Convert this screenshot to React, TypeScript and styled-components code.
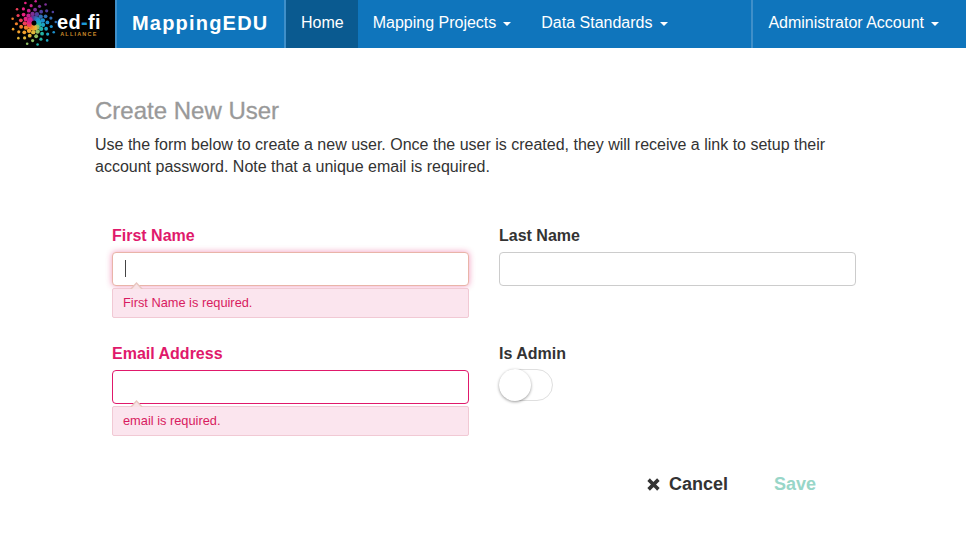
import React from "react";
import styled, { createGlobalStyle } from "styled-components";

const GlobalStyle = createGlobalStyle`
  html, body {
    margin: 0;
    padding: 0;
    background: #fff;
    font-family: "Liberation Sans", Arial, sans-serif;
    color: #333;
  }
  * { box-sizing: border-box; }
`;

const NavBar = styled.nav`
  display: flex;
  height: 48px;
  background: #0f75bc;
  color: #fff;
`;

const LogoBox = styled.div`
  display: flex;
  align-items: center;
  width: 115px;
  padding-left: 11px;
  background: #000;
`;

const LogoWords = styled.div`
  display: flex;
  flex-direction: column;
  align-items: center;
  margin: 3px 0 0 -2px;
`;

const LogoName = styled.div`
  font-size: 20px;
  line-height: 17px;
  font-weight: 700;
  letter-spacing: 0.3px;

  span {
    color: #1c9ad6;
  }
`;

const LogoSub = styled.div`
  font-size: 5.5px;
  line-height: 7px;
  font-weight: 700;
  letter-spacing: 1.2px;
  color: #c98a2b;
`;

const Brand = styled.div`
  display: flex;
  align-items: center;
  width: 169px;
  padding: 0 0 2px 15px;
  border-left: 2px solid #3f8fc9;
  font-size: 20px;
  font-weight: 700;
  letter-spacing: 1.2px;
`;

const NavItem = styled.div<{ $active?: boolean; $divided?: boolean }>`
  display: flex;
  align-items: center;
  gap: 7px;
  padding: 0 ${(p) => (p.$active ? "14px" : "15px")} 2px 15px;
  font-size: 16px;
  background: ${(p) => (p.$active ? "#0a5a90" : "transparent")};
  border-left: ${(p) => (p.$divided ? "2px solid #3f8fc9" : "none")};
`;

const Caret = styled.i`
  width: 0;
  height: 0;
  margin-top: 1px;
  border-top: 4px solid currentColor;
  border-left: 4px solid transparent;
  border-right: 4px solid transparent;
`;

const NavSpacer = styled.div`
  flex: 1;
`;

const RightNav = styled.div`
  display: flex;
  margin-right: 12px;
`;

const Page = styled.main`
  padding: 50px 0 0 95px;
  width: 860px;
`;

const Title = styled.h1`
  margin: 0;
  font-size: 24px;
  line-height: 26px;
  font-weight: 500;
  color: #999;
  -webkit-text-stroke: 0.3px #999;
`;

const Intro = styled.p`
  margin: 10px 0 0;
  font-size: 16px;
  line-height: 22px;
`;

const Form = styled.form`
  display: grid;
  grid-template-columns: 357px 357px;
  grid-auto-rows: 118px;
  column-gap: 30px;
  margin: 47px 0 0 17px;
`;

const Field = styled.div`
  display: flex;
  flex-direction: column;
`;

const Label = styled.label<{ $error?: boolean }>`
  font-size: 16px;
  line-height: 22px;
  font-weight: 700;
  margin-bottom: 5px;
  color: ${(p) => (p.$error ? "#e0196b" : "#333")};
`;

const InputWrap = styled.div`
  position: relative;
`;

const TextInput = styled.input<{ $state?: "focus" | "error" }>`
  display: block;
  width: 100%;
  height: 34px;
  padding: 6px 12px;
  border-radius: 4px;
  outline: none;
  background: #fff;
  border: 1px solid
    ${(p) =>
      p.$state === "focus"
        ? "#e9b4a8"
        : p.$state === "error"
          ? "#e0196b"
          : "#ccc"};
  box-shadow: ${(p) =>
    p.$state === "focus"
      ? "0 0 6px rgba(224, 25, 107, 0.45)"
      : "none"};
`;

const TextCursor = styled.span`
  position: absolute;
  left: 13px;
  top: 8px;
  width: 1px;
  height: 17px;
  background: #444;
`;

const ErrorBox = styled.div`
  position: relative;
  height: 30px;
  margin-top: 2px;
  padding-left: 10px;
  font-size: 12.8px;
  line-height: 28px;
  color: #d81b60;
  background: #fbe5ee;
  border: 1px solid #f1c9d4;
  border-radius: 2px;

  &::before {
    content: "";
    position: absolute;
    left: 17px;
    top: -7px;
    width: 13px;
    height: 7px;
    background: #e8c6bf;
    clip-path: polygon(50% 0, 100% 100%, 0 100%);
  }

  &::after {
    content: "";
    position: absolute;
    left: 19px;
    top: -5px;
    width: 9px;
    height: 5px;
    background: #f8e2e6;
    clip-path: polygon(50% 0, 100% 100%, 0 100%);
  }
`;

const Toggle = styled.div`
  position: relative;
  width: 54px;
  height: 32px;
  margin-top: -1px;
  border: 1px solid #dfdfdf;
  border-radius: 16px;
  background: #fff;

  &::after {
    content: "";
    position: absolute;
    left: -1px;
    top: -1px;
    width: 32px;
    height: 32px;
    border-radius: 50%;
    background: #fff;
    box-shadow: 0 1px 3px rgba(0, 0, 0, 0.4);
  }
`;

const Actions = styled.div`
  display: flex;
  justify-content: flex-end;
  align-items: center;
  gap: 46px;
  width: 721px;
  margin-top: 11px;
  font-size: 18px;
  line-height: 24px;
  font-weight: 700;
`;

const ActionButton = styled.div<{ $muted?: boolean }>`
  display: flex;
  align-items: center;
  gap: 9px;
  color: ${(p) => (p.$muted ? "#98d6c8" : "#333")};
`;

const arms = [
  "#7d2f96", "#4f3f9e", "#2f6fb5", "#1c8fcb", "#1ca5c4", "#22b3a5",
  "#8fbf63", "#e0b53a", "#f2a02c", "#f27f2a", "#ee3f58", "#e8217f",
  "#c8208f",
];

const LogoMark = () => {
  const cx = 23;
  const cy = 23;
  const dots: React.ReactNode[] = [];
  arms.forEach((color, a) => {
    for (let i = 0; i < 5; i++) {
      const r = 5 + i * 4.2;
      const angle = (a / arms.length) * Math.PI * 2 + i * 0.24 - Math.PI / 2 - 0.4;
      dots.push(
        <circle
          key={`${a}-${i}`}
          cx={cx + r * Math.cos(angle)}
          cy={cy + r * Math.sin(angle)}
          r={2.5 - i * 0.3}
          fill={color}
        />,
      );
    }
  });
  return (
    <svg width="48" height="48" viewBox="0 0 48 48">
      {dots}
    </svg>
  );
};

const CloseIcon = () => (
  <svg width="13" height="13" viewBox="0 0 13 13">
    <path d="M2.9 2.9 L10.1 10.1 M10.1 2.9 L2.9 10.1" stroke="#333" strokeWidth="3.6" strokeLinecap="square" />
  </svg>
);

export default function App() {
  return (
    <>
      <GlobalStyle />
      <NavBar>
        <LogoBox>
          <LogoMark />
          <LogoWords>
            <LogoName>
              ed<span>-</span>fi
            </LogoName>
            <LogoSub>ALLIANCE</LogoSub>
          </LogoWords>
        </LogoBox>
        <Brand>MappingEDU</Brand>
        <NavItem $active $divided>Home</NavItem>
        <NavItem>Mapping Projects <Caret /></NavItem>
        <NavItem>Data Standards <Caret /></NavItem>
        <NavSpacer />
        <RightNav>
          <NavItem $divided>Administrator Account <Caret /></NavItem>
        </RightNav>
      </NavBar>
      <Page>
        <Title>Create New User</Title>
        <Intro>
          Use the form below to create a new user. Once the user is created, they will receive a link to setup their
          account password. Note that a unique email is required.
        </Intro>
        <Form>
          <Field>
            <Label $error>First Name</Label>
            <InputWrap>
              <TextInput $state="focus" />
              <TextCursor />
            </InputWrap>
            <ErrorBox>First Name is required.</ErrorBox>
          </Field>
          <Field>
            <Label>Last Name</Label>
            <TextInput />
          </Field>
          <Field>
            <Label $error>Email Address</Label>
            <TextInput $state="error" />
            <ErrorBox>email is required.</ErrorBox>
          </Field>
          <Field>
            <Label>Is Admin</Label>
            <Toggle />
          </Field>
        </Form>
        <Actions>
          <ActionButton><CloseIcon />Cancel</ActionButton>
          <ActionButton $muted>Save</ActionButton>
        </Actions>
      </Page>
    </>
  );
}
